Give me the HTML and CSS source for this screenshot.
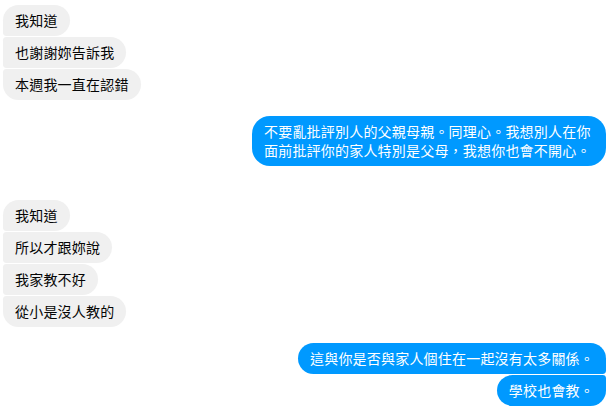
FILE: index.html
```html
<!DOCTYPE html>
<html lang="zh-Hant">
<head>
    <meta charset="UTF-8">
    <meta name="viewport" content="width=device-width, initial-scale=1.0">
    <title>Chat</title>
    <link rel="stylesheet" href="styles.css">
</head>
<body>
<div class="thread">
    <div class="group them">
        <div class="msg">我知道</div>
        <div class="msg">也謝謝妳告訴我</div>
        <div class="msg">本週我一直在認錯</div>
    </div>

    <div class="group me">
        <div class="msg">不要亂批評別人的父親母親。同理心。我想別人在你面前批評你的家人特別是父母，我想你也會不開心。</div>
    </div>

    <div class="group them gap-lg">
        <div class="msg">我知道</div>
        <div class="msg">所以才跟妳說</div>
        <div class="msg">我家教不好</div>
        <div class="msg">從小是沒人教的</div>
    </div>

    <div class="group me">
        <div class="msg">這與你是否與家人個住在一起沒有太多關係。</div>
        <div class="msg">學校也會教。</div>
    </div>
</div>
</body>
</html>
```

FILE: styles.css
```css
body {
    margin: 0;
    padding: 5px 9px 0 3px;
    background: #fff;
    font-family: "Noto Sans CJK TC", "Noto Sans", sans-serif;
    font-size: 14px;
}

.thread {
    display: flex;
    flex-direction: column;
}

.group {
    display: flex;
    flex-direction: column;
    gap: 1px;
    margin-top: 16px;
}

.group:first-child {
    margin-top: 0;
}

.group.gap-lg {
    margin-top: 34px;
}

.them {
    align-items: flex-start;
}

.me {
    align-items: flex-end;
}

.msg {
    padding: 6px 12px;
    line-height: 19px;
    letter-spacing: 0.2px;
    max-width: 330px;
    border-radius: 18px;
}

.them .msg {
    background-color: #f0f0f0;
    color: #050505;
    border-top-left-radius: 4px;
    border-bottom-left-radius: 4px;
}

.them .msg:first-child {
    border-top-left-radius: 18px;
}

.them .msg:last-child {
    border-bottom-left-radius: 18px;
}

.me .msg {
    background-color: #0099ff;
    color: #fff;
    border-top-right-radius: 4px;
    border-bottom-right-radius: 4px;
}

.me .msg:first-child {
    border-top-right-radius: 18px;
}

.me .msg:last-child {
    border-bottom-right-radius: 18px;
}
```
